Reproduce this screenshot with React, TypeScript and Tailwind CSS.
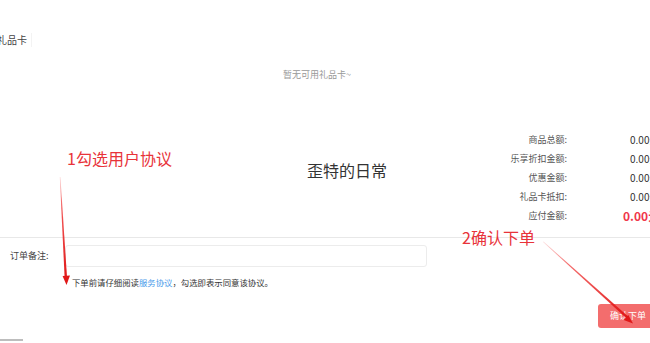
import React from "react";

const rows = [
  { label: "商品总额:", value: "0.00元" },
  { label: "乐享折扣金额:", value: "0.00元" },
  { label: "优惠金额:", value: "0.00元" },
  { label: "礼品卡抵扣:", value: "0.00元" },
];

export default function App() {
  return (
    <div
      className="relative w-[650px] h-[343px] overflow-hidden bg-white text-[#333]"
      style={{ fontFamily: '"Noto Sans CJK SC", "Noto Sans", sans-serif' }}
    >
      <div className="pt-[33px] flex text-[10px] leading-[14px]">
        <span className="ml-[-3px] block pr-[4px] border-r border-[#f3f3f3] text-[#444]">礼品卡</span>
      </div>
      <div className="mt-[22px] pr-[16px] text-center text-[9px] leading-[12px] text-[#999]">
        暂无可用礼品卡~
      </div>

      <div className="mt-[49px] flex">
        <div className="w-[480px] shrink-0 flex items-center justify-center pl-[214px] pb-[15px]">
          <span className="text-[16px] leading-[22px] text-[#333]">歪特的日常</span>
        </div>
        <div className="grid shrink-0 grid-cols-[87px_auto] whitespace-nowrap">
          {rows.map((r) => (
            <React.Fragment key={r.label}>
              <div className="h-[19px] text-right text-[9px] leading-[19px] text-[#555]">{r.label}</div>
              <div className="h-[19px] pl-[63px] text-[10px] leading-[19px] text-[#333]">{r.value}</div>
            </React.Fragment>
          ))}
          <div className="h-[19px] text-right text-[9px] leading-[19px] text-[#555]">应付金额:</div>
          <div className="h-[19px] pl-[56px] text-[12px] font-bold leading-[19px] text-[#f0374b]">0.00元</div>
        </div>
      </div>

      <div className="mt-[12px] h-px bg-[#e8e8e8]" />

      <div className="mt-[7px] flex items-center">
        <span className="pl-[10px] w-[65px] text-[9px] leading-[12px] text-[#444]">订单备注:</span>
        <div className="w-[362px] h-[22px] rounded-[3px] border border-[#ececec] bg-white" />
      </div>

      <div className="mt-[9px] pl-[72px] text-[8.4px] leading-[12px] text-[#333]">
        下单前请仔细阅读<span className="text-[#4a9bea]">服务协议</span>，勾选即表示同意该协议。
      </div>

      <div className="mt-[16px] flex justify-end">
        <div className="mr-[-8px] w-[60px] h-[24px] rounded-[3px] bg-[#f36d6d] flex items-center justify-center text-[9px] leading-[12px] text-white">
          确认下单
        </div>
      </div>

      <div className="mt-[11px] h-[2px] w-[23px] bg-[#bdbdbd]" />

      <div className="absolute left-[67px] top-[148px] text-[16px] leading-[20px] text-[#e8333a]">
        1勾选用户协议
      </div>
      <div className="absolute left-[462px] top-[227px] text-[16px] leading-[20px] text-[#e8333a]">
        2确认下单
      </div>

      <svg className="pointer-events-none absolute inset-0" width="650" height="343" viewBox="0 0 650 343">
        <defs>
          <linearGradient id="g1" x1="0" y1="177" x2="0" y2="280" gradientUnits="userSpaceOnUse">
            <stop offset="0" stopColor="#ee2a2a" stopOpacity="0.2" />
            <stop offset="0.3" stopColor="#ee2a2a" stopOpacity="0.8" />
            <stop offset="1" stopColor="#e01818" stopOpacity="1" />
          </linearGradient>
          <linearGradient id="g2" x1="543" y1="242" x2="630" y2="320" gradientUnits="userSpaceOnUse">
            <stop offset="0" stopColor="#ee2a2a" stopOpacity="0.15" />
            <stop offset="0.3" stopColor="#ee2a2a" stopOpacity="0.7" />
            <stop offset="1" stopColor="#e01818" stopOpacity="1" />
          </linearGradient>
        </defs>
        <polygon points="59.8,177 60.4,177 67,277 64.6,277" fill="url(#g1)" />
        <polygon points="62.6,276 70,275.6 66.5,285" fill="#e01818" />
        <polygon points="543,242 543.5,241.6 628.8,317.1 627.2,318.9" fill="url(#g2)" />
        <polygon points="623.7,320.1 628.3,314.9 633,323.5" fill="#e01818" />
      </svg>
    </div>
  );
}
